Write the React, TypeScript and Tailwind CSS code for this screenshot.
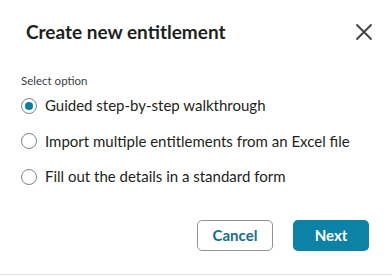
import { useState } from 'react';

const options = [
  'Guided step-by-step walkthrough',
  'Import multiple entitlements from an Excel file',
  'Fill out the details in a standard form',
];

export default function App() {
  const [selected, setSelected] = useState(0);

  return (
    <div className="w-[392px] h-[276px] bg-white overflow-hidden" style={{ fontFamily: 'Lato, "Noto Sans", sans-serif' }}>
      <div className="h-[275px] border-b border-[#e5e7eb] flex flex-col">
        {/* Header */}
        <div className="flex items-center justify-between pl-[26px] pr-[19px] pt-[19px]">
          <h2 className="text-[19px] font-bold text-[#1d1f21] leading-[26px]">Create new entitlement</h2>
          <button aria-label="Close" className="w-[18px] h-[18px] flex items-center justify-center text-[#3c4146]">
            <svg viewBox="0 0 18 18" className="w-[18px] h-[18px]" fill="none" stroke="currentColor" strokeWidth={1.8} strokeLinecap="round">
              <path d="M2 2l14 14M16 2L2 16" />
            </svg>
          </button>
        </div>

        {/* Body */}
        <div className="pl-[21px] pt-[28px]">
          <p className="text-[11.5px] text-[#3a3f44] leading-[16px]">Select option</p>
          <div className="flex flex-col gap-[14.5px] mt-[6px]">
            {options.map((label, i) => (
              <label key={label} className="flex items-center gap-[8px] cursor-pointer" onClick={() => setSelected(i)}>
                <span className="w-[16px] h-[16px] rounded-full border border-[#7c858c] flex items-center justify-center bg-white shrink-0">
                  {selected === i && <span className="w-[8px] h-[8px] rounded-full bg-[#0a7fa6]" />}
                </span>
                <span className="text-[15px] text-[#1d1f21] leading-[21px]">{label}</span>
              </label>
            ))}
          </div>
        </div>

        {/* Footer */}
        <div className="flex justify-end gap-[20px] pr-[23px] mt-auto mb-[23px]">
          <button className="w-[76px] h-[31px] rounded-[5px] border border-[#8d959b] text-[#136d8c] font-bold text-[15px]">
            Cancel
          </button>
          <button className="w-[76px] h-[31px] rounded-[5px] bg-[#0b82a6] text-white font-bold text-[15px]">
            Next
          </button>
        </div>
      </div>
    </div>
  );
}
